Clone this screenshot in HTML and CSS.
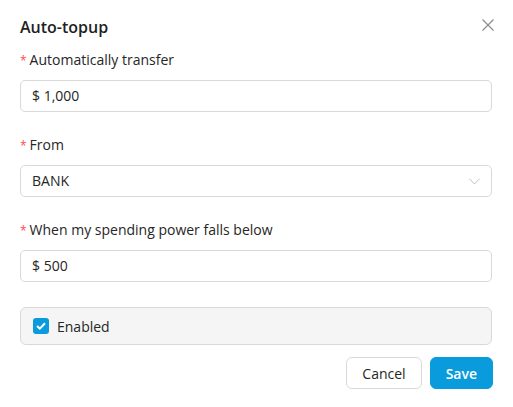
FILE: index.html
```html
<!DOCTYPE html>
<html>
<head>
<meta charset="utf-8">
<link rel="stylesheet" href="styles.css">
</head>
<body>
<div class="modal">
  <div class="header">
    <h1 class="title">Auto-topup</h1>
    <button class="close" aria-label="Close">
      <svg width="12" height="12" viewBox="0 0 12 12"><path d="M0.5 0.5 L11.5 11.5 M11.5 0.5 L0.5 11.5" stroke="#8c8c8c" stroke-width="1.2" fill="none"/></svg>
    </button>
  </div>
  <div class="item">
    <label class="label"><span class="req">*</span>Automatically transfer</label>
    <div class="input">$ 1,000</div>
  </div>
  <div class="item">
    <label class="label"><span class="req">*</span>From</label>
    <div class="input select">
      <span>BANK</span>
      <svg width="11" height="7" viewBox="0 0 11 7"><path d="M0.5 0.8 L5.5 6 L10.5 0.8" stroke="#bfbfbf" stroke-width="1" fill="none"/></svg>
    </div>
  </div>
  <div class="item">
    <label class="label"><span class="req">*</span>When my spending power falls below</label>
    <div class="input">$ 500</div>
  </div>
  <div class="enabled">
    <span class="check">
      <svg width="10" height="8" viewBox="0 0 10 8"><path d="M1 4 L3.8 6.6 L9 1.3" stroke="#fff" stroke-width="2" fill="none"/></svg>
    </span>
    <span>Enabled</span>
  </div>
  <div class="footer">
    <button class="btn">Cancel</button>
    <button class="btn primary">Save</button>
  </div>
</div>
</body>
</html>
```
FILE: styles.css
```css
html, body {
  margin: 0;
  background: #fff;
}
body {
  font-family: "Open Sans", "Noto Sans", sans-serif;
  font-size: 14px;
  color: #262626;
}
.modal {
  padding: 16px 21px 0 20px;
}
.header {
  display: flex;
  justify-content: space-between;
  align-items: flex-start;
  height: 34px;
}
.title {
  margin: 0;
  font-size: 16px;
  font-weight: 600;
  line-height: 22px;
  color: #1f1f1f;
}
.close {
  border: 0;
  background: none;
  padding: 0;
  margin: 3px -2px 0 0;
  width: 12px;
  height: 12px;
  display: flex;
}
.item {
  margin-bottom: 23px;
}
.label {
  display: block;
  line-height: 20px;
  margin-bottom: 9px;
}
.req {
  color: #ff4d4f;
  font-size: 12px;
  margin-right: 3px;
  margin-left: 0;
}
.input {
  height: 32px;
  box-sizing: border-box;
  border: 1px solid #d9d9d9;
  border-radius: 5px;
  padding: 0 11px;
  display: flex;
  align-items: center;
  line-height: 20px;
}
.select {
  justify-content: space-between;
  padding-right: 11px;
}
.enabled {
  margin-top: 25px;
  height: 38px;
  box-sizing: border-box;
  border: 1px solid #d9d9d9;
  border-radius: 6px;
  background: #f5f5f5;
  display: flex;
  align-items: center;
  padding-left: 12px;
  gap: 8px;
}
.check {
  width: 16px;
  height: 16px;
  border-radius: 3px;
  background: #0a9bdc;
  display: flex;
  align-items: center;
  justify-content: center;
}
.footer {
  display: flex;
  justify-content: flex-end;
  gap: 8px;
  margin-top: 12px;
  margin-right: -1px;
}
.btn {
  font-family: inherit;
  font-size: 14px;
  height: 32px;
  border: 1px solid #d9d9d9;
  border-radius: 6px;
  background: #fff;
  color: #262626;
  padding: 0 15px;
}
.primary {
  background: #0a9bdc;
  border-color: #0a9bdc;
  color: #fff;
  font-weight: 600;
}
```
